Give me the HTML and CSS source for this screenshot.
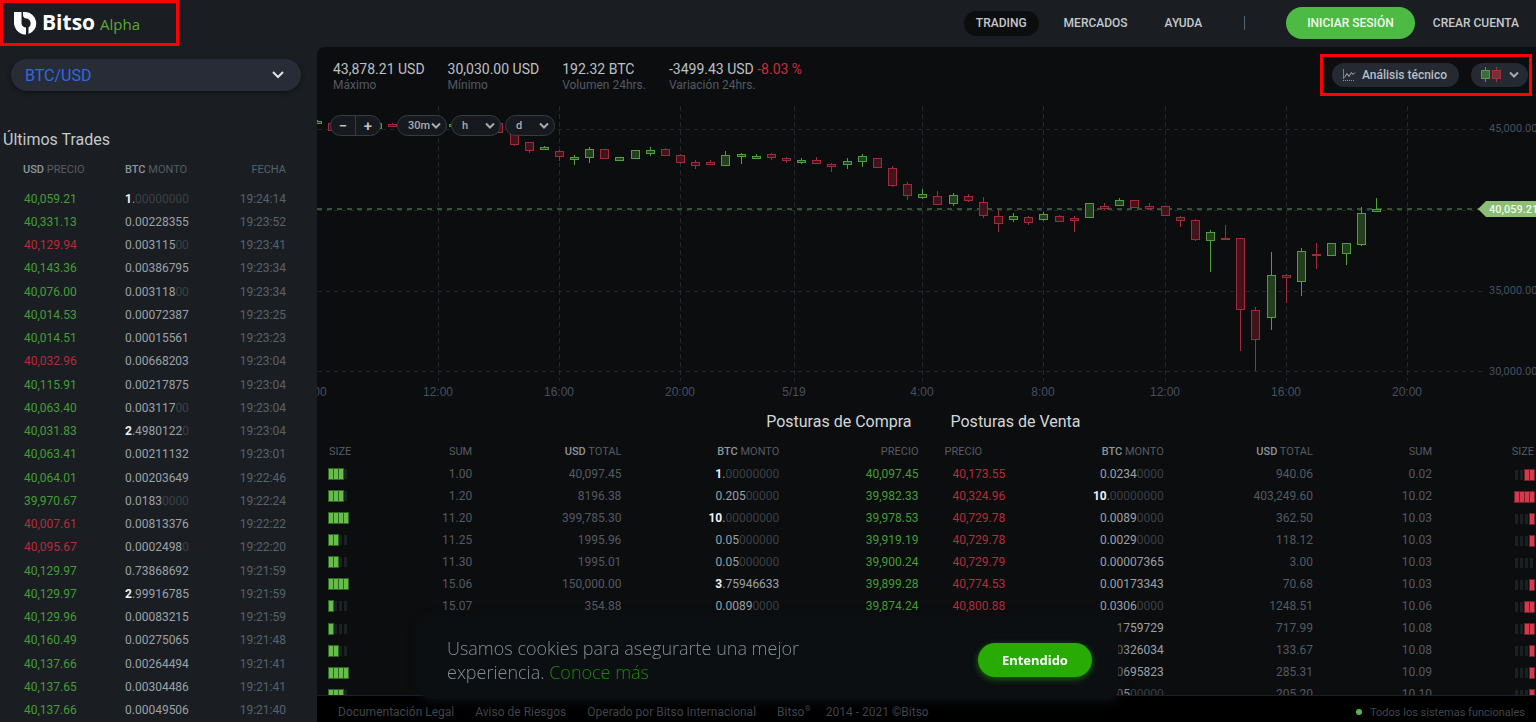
FILE: index.html
```html
<!DOCTYPE html>
<html lang="es">
<head>
<meta charset="utf-8">
<title>Bitso Alpha</title>
<link rel="stylesheet" href="styles.css">
</head>
<body>
<div class="app">
  <header class="topbar">
    <a class="logo" href="#">
      <svg class="logo-mark" viewBox="0 0 24 24" aria-hidden="true">
        <path d="M1 1H8.500V13A5 5 0 0 0 13 16.500V23.500A12 12 0 0 1 1 12Z" fill="#fff"/>
        <path d="M10 1H12.500A11.300 11.300 0 0 1 15.500 23V16.500A5.200 5.200 0 0 0 14.500 7.500H13.500A3.800 3.800 0 0 1 10 4Z" fill="#fff"/>
      </svg>
      <span class="logo-name">Bitso</span>
      <span class="logo-sub">Alpha</span>
    </a>
    <nav class="nav">
      <a class="nav-link active" href="#">TRADING</a>
      <a class="nav-link" href="#">MERCADOS</a>
      <a class="nav-link" href="#">AYUDA</a>
      <span class="nav-sep"></span>
      <button class="login" type="button">INICIAR SESIÓN</button>
      <a class="signup" href="#">CREAR CUENTA</a>
    </nav>
    <span class="mark mark-logo"></span>
  </header>

  <aside class="sidebar">
    <div class="pair">
      <select class="pair-select" aria-label="Mercado"><option>BTC/USD</option></select>
      <svg class="chev chev-lg" viewBox="0 0 12 8" aria-hidden="true"><path d="M1 1l5 5 5-5"/></svg>
    </div>
    <h2 class="side-title">Últimos Trades</h2>
    <div class="trades-wrap">
      <table class="trades">
        <thead><tr><th><b>USD</b> PRECIO</th><th><b>BTC</b> MONTO</th><th class="num">FECHA</th></tr></thead>
        <tbody id="trades"></tbody>
      </table>
    </div>
  </aside>

  <main class="main">
    <section class="market">
      <dl class="stats">
        <div><dd>43,878.21 USD</dd><dt>Máximo</dt></div>
        <div><dd>30,030.00 USD</dd><dt>Mínimo</dt></div>
        <div><dd>192.32 BTC</dd><dt>Volumen 24hrs.</dt></div>
        <div><dd>-3499.43 USD <span class="neg">-8.03 %</span></dd><dt>Variación 24hrs.</dt></div>
      </dl>
      <div class="tools">
        <button class="tool" type="button">
          <svg class="tool-icon" viewBox="0 0 14 14" aria-hidden="true">
            <path d="M1.500 1V11" stroke="#76808a"/><path d="M2.500 9.500L5 5.500l2 3 2.500-4 1.500 2 2-2" stroke="#a9b0b7"/><path d="M1 12.500H13" stroke="#8a929b" stroke-dasharray="1 1"/>
          </svg>
          Análisis técnico
        </button>
        <button class="tool tool-type" type="button" aria-label="Tipo de gráfica">
          <svg class="candles-icon" viewBox="0 0 20 16" aria-hidden="true">
            <path d="M4.500 0v4M4.500 12v3" stroke="#4fa13f"/><rect x="0.500" y="3.500" width="8" height="8" fill="#3f6b39" stroke="#4fa13f"/>
            <path d="M15.500 0v4M15.500 12v3" stroke="#a32f3f"/><rect x="11.500" y="3.500" width="8" height="8" fill="#73303b" stroke="#a32f3f"/>
          </svg>
          <svg class="chev" viewBox="0 0 12 8" aria-hidden="true"><path d="M2 1.500l4 4 4-4"/></svg>
        </button>
      </div>
      <span class="mark mark-tools"></span>
    </section>

    <section class="chart">
      <svg class="chart-svg" id="chart" viewBox="0 0 1219 301" role="img" aria-label="Gráfica de velas BTC/USD"></svg>
      <div class="controls">
        <div class="zoom"><button type="button">−</button><button type="button">+</button></div>
        <div class="period"><select aria-label="Minutos"><option>30m</option></select><svg class="chev" viewBox="0 0 12 8" aria-hidden="true"><path d="M2 1.500l4 4 4-4"/></svg></div>
        <div class="period"><select aria-label="Horas"><option>h</option></select><svg class="chev" viewBox="0 0 12 8" aria-hidden="true"><path d="M2 1.500l4 4 4-4"/></svg></div>
        <div class="period"><select aria-label="Días"><option>d</option></select><svg class="chev" viewBox="0 0 12 8" aria-hidden="true"><path d="M2 1.500l4 4 4-4"/></svg></div>
      </div>
    </section>

    <section class="book">
      <div class="side bids">
        <h2>Posturas de Compra</h2>
        <table>
          <colgroup><col class="b1"><col class="b2"><col class="b3"><col class="b4"></colgroup>
          <thead><tr><th class="size-sum"><span>SIZE</span><span>SUM</span></th><th><b>USD</b> TOTAL</th><th><b>BTC</b> MONTO</th><th>PRECIO</th></tr></thead>
          <tbody id="bids"></tbody>
        </table>
      </div>
      <div class="side asks">
        <h2>Posturas de Venta</h2>
        <table>
          <colgroup><col class="a1"><col class="a2"><col class="a3"><col class="a4"><col class="a5"></colgroup>
          <thead><tr><th class="left">PRECIO</th><th><b>BTC</b> MONTO</th><th><b>USD</b> TOTAL</th><th>SUM</th><th>SIZE</th></tr></thead>
          <tbody id="asks"></tbody>
        </table>
      </div>
    </section>

    <footer class="footer">
      <a href="#">Documentación Legal</a>
      <a href="#">Aviso de Riesgos</a>
      <span>Operado por Bitso Internacional</span>
      <span class="brand">Bitso<sup>®</sup></span>
      <span>2014 - 2021 ©Bitso</span>
      <span class="status"><i class="dot"></i>Todos los sistemas funcionales</span>
    </footer>
  </main>
</div>

<div class="cookies" role="dialog" aria-label="Cookies">
  <p>Usamos cookies para asegurarte una mejor experiencia. <a href="#">Conoce más</a></p>
  <button type="button">Entendido</button>
</div>
<script src="app.js"></script>
</body>
</html>
```
FILE: styles.css
```css
* { box-sizing: border-box; }
body { margin: 0; background: #1a1e22; color: #c3c8cc; font-family: Roboto, "Liberation Sans", sans-serif; font-size: 12px; }
button, select { font: inherit; color: inherit; border: 0; margin: 0; padding: 0; cursor: pointer; }
select { appearance: none; }
a { color: inherit; text-decoration: none; }
h2 { margin: 0; font-size: 16px; font-weight: 400; line-height: 20px; }
table { border-collapse: collapse; }
th, td { padding: 0; text-align: right; font-weight: 400; white-space: nowrap; }
th { font-size: 11px; color: #555c63; }
th b { font-weight: 500; color: #8b969e; }

.app { display: grid; grid-template: 47px minmax(0, 1fr) / 317px minmax(0, 1fr); height: 100vh; min-height: 560px; overflow: hidden; }
.mark { position: absolute; border: 3px solid #fd0001; pointer-events: none; z-index: 5; }

.topbar { grid-column: 1 / -1; position: relative; display: flex; align-items: center; justify-content: space-between; padding: 0 17px 1px 13px; }
.mark-logo { left: 0; top: 0; width: 179px; height: 46px; }
.logo { display: flex; align-items: baseline; font-family: "Open Sans", "Noto Sans", sans-serif; line-height: 28px; }
.logo-mark { width: 24px; height: 24px; align-self: center; }
.logo-name { margin-left: 5px; color: #fff; font-size: 21px; font-weight: 700; }
.logo-sub { margin-left: 5px; color: #5fa836; font-size: 15px; }
.nav { display: flex; align-items: center; font-weight: 500; }
.nav-link { padding: 0 12px; line-height: 25px; border-radius: 13px; margin-right: 13px; }
.nav-link.active { background: #0c0d0f; }
.nav-sep { width: 1px; height: 14px; background: #59636d; margin: 0 41px 0 17px; }
.login { height: 32px; padding: 0 21px; border-radius: 16px; background: #4dbb43; color: #f0f8ef; margin-right: 18px; }

.sidebar { display: flex; flex-direction: column; min-height: 0; }
.pair { position: relative; margin: 12px 16px 0 11px; }
.pair-select { width: 100%; height: 32px; padding: 0 14px; border-radius: 16px; background: #272c37; color: #2e6be0; font-size: 16px; box-shadow: 0 2px 4px #101316; }
.chev { width: 12px; height: 8px; fill: none; stroke: #a8acb0; stroke-width: 2; pointer-events: none; }
.chev-lg { position: absolute; right: 17px; top: 12px; stroke: #dfe3e8; }
.side-title { margin: 39px 0 2px 3px; }
.trades-wrap { flex: 1; min-height: 0; }
.trades { width: 100%; height: 100%; table-layout: fixed; }
.trades thead tr { height: 35px; }
.trades th:nth-child(1) { width: 125px; padding-left: 23px; }
.trades td:nth-child(1) { padding-left: 24px; }
.trades th, .trades td { text-align: left; }
.trades th.num, .trades td.num { text-align: right; padding-right: 31px; color: #59616a; }

.main { display: flex; flex-direction: column; min-width: 0; min-height: 0; background: #0c0d0f; border-top-left-radius: 8px; overflow: hidden; }
.market { position: relative; display: flex; justify-content: space-between; align-items: flex-start; padding: 14px 8px 0 16px; }
.stats { display: flex; gap: 23px; margin: 0; white-space: nowrap; }
.stats div { display: flex; flex-direction: column; }
.stats dd { margin: 0; font-size: 14px; line-height: 16px; color: #bcc1c5; }
.stats dt { line-height: 16px; color: #525a63; }
.neg { color: #c92e3e; }
.tools { display: flex; gap: 12px; padding-top: 2px; }
.tool { display: flex; align-items: center; gap: 6px; height: 24px; padding: 0 12px 0 10px; border-radius: 12px; background: #242932; color: #b9bfc6; font-weight: 500; }
.tool-type { padding: 0 8px 0 10px; gap: 7px; }
.tool-icon { width: 14px; height: 14px; fill: none; }
.candles-icon { width: 20px; height: 16px; fill: none; }
.mark-tools { right: 4px; top: 7px; width: 212px; height: 42px; }

.chart { position: relative; margin-top: 11px; flex: none; }
.chart-svg { display: block; width: 100%; height: auto; }
.axis { fill: #465060; font: 12px "Liberation Sans", sans-serif; text-anchor: middle; }
.price { fill: #465060; font: 11px Roboto, sans-serif; }
.price-now { fill: #f2f8ee; font: 500 11px Roboto, sans-serif; }
.controls { position: absolute; left: 13px; top: 11px; display: flex; gap: 4px; font-weight: 500; color: #a8acb0; }
.zoom { display: flex; width: 51px; height: 21px; margin-right: 12px; border: 1px solid #363c44; border-radius: 11px; background: #161a1f; overflow: hidden; }
.zoom button { flex: 1; background: none; font-size: 15px; line-height: 18px; color: #c4c8cb; }
.zoom button + button { border-left: 1px solid #363c44; }
.period { position: relative; width: 50px; height: 21px; }
.period select { width: 100%; height: 21px; padding: 0 10px; border: 1px solid #363c44; border-radius: 11px; background: #161a1f; font-size: 11px; font-weight: 500; }
.period .chev { position: absolute; right: 5px; top: 7px; }

.book { display: grid; grid-template-columns: 1fr 1fr; flex: 1; min-height: 0; overflow: hidden; padding-top: 7px; }
.book h2 { color: #d3d7da; }
.book table { width: 100%; table-layout: fixed; color: #535a62; }
.book thead tr { height: 31px; }
.book tbody tr { height: 22px; }
.book th { padding-top: 8px; }
.bids { padding: 0 8px 0 12px; }
.bids h2 { text-align: right; padding-right: 7px; }
.asks { padding: 0 2px 0 18px; }
.asks h2 { padding-left: 6px; }
.size-sum span + span { float: right; }
.size-sum { text-align: left; }
.size-sum .bars { float: left; margin-top: 2px; }
td.size-sum { text-align: right; }
.b1 { width: 24.3%; } .b2 { width: 25.3%; } .b3 { width: 26.8%; } .b4 { width: 23.6%; }
.a1 { width: 17%; } .a2 { width: 20.2%; } .a3 { width: 25.3%; } .a4 { width: 20.2%; } .a5 { width: 17.3%; }
.book .left { text-align: left; }
.asks td.left { padding-left: 8px; }
.bars { display: inline-flex; gap: 1px; vertical-align: middle; }
.bars i { width: 4px; height: 10px; background: #1b2025; border-right: 1px solid #0c0d0f; }
.bars i.on { border: 0; }
.bids .on { background: #66bd49; box-shadow: 0 0 0 1px #2f6626; }
.asks .on { background: #d6394c; box-shadow: 0 0 0 1px #6d222d; }
.up { color: #459c38; }
.down { color: #b62c3a; }
.amt { color: #9aa1a8; }
.amt b { font-weight: 700; color: #eef1f3; }
.amt s { text-decoration: none; color: #3a4045; }

.footer { display: flex; align-items: center; gap: 21px; flex: none; height: 27px; padding: 6px 11px 0 21px; border-top: 1px solid #1b2127; background: #000; color: #40464d; white-space: nowrap; }
.brand { margin-right: -6px; }
.footer sup { font-size: 8px; line-height: 0; }
.status { display: flex; align-items: center; gap: 8px; margin-left: auto; font-size: 11px; }
.dot { width: 6px; height: 6px; border-radius: 3px; background: #5bb54a; }

.cookies { position: fixed; left: 422px; right: 418px; bottom: 23px; display: flex; align-items: center; justify-content: space-between; min-height: 78px; padding: 0 26px 0 25px; border-radius: 8px; background: #0b0f12; box-shadow: 0 0 12px 2px #0e1215; }
.cookies p { max-width: 370px; margin: 0; font: 300 18px/24px "Open Sans", "Noto Sans", sans-serif; color: #858d97; }
.cookies a { color: #1d8a05; }
.cookies button { height: 34px; padding: 0 24px; border-radius: 17px; background: #28ab04; color: #fff; font: 700 13px "Noto Sans", sans-serif; box-shadow: 0 2px 6px #1b6b08; }
```
FILE: app.js
```js
// Amounts use "*" around a highlighted integer part and "|" before the dimmed trailing zeros.
function amount(text) {
  var parts = text.split('|');
  var head = parts[0].replace(/^\*(\d+)\*/, '<b>$1</b>');
  return head + (parts[1] ? '<s>' + parts[1] + '</s>' : '');
}

var trades = [
  ['u', '40,059.21', '*1*.|00000000', '19:24:14'],
  ['u', '40,331.13', '0.00228355', '19:23:52'],
  ['d', '40,129.94', '0.003115|00', '19:23:41'],
  ['u', '40,143.36', '0.00386795', '19:23:34'],
  ['u', '40,076.00', '0.003118|00', '19:23:34'],
  ['u', '40,014.53', '0.00072387', '19:23:25'],
  ['u', '40,014.51', '0.00015561', '19:23:23'],
  ['d', '40,032.96', '0.00668203', '19:23:04'],
  ['u', '40,115.91', '0.00217875', '19:23:04'],
  ['u', '40,063.40', '0.003117|00', '19:23:04'],
  ['u', '40,031.83', '*2*.4980122|0', '19:23:04'],
  ['u', '40,063.41', '0.00211132', '19:23:01'],
  ['u', '40,064.01', '0.00203649', '19:22:46'],
  ['u', '39,970.67', '0.0183|0000', '19:22:24'],
  ['d', '40,007.61', '0.00813376', '19:22:22'],
  ['d', '40,095.67', '0.0002498|0', '19:22:20'],
  ['u', '40,129.97', '0.73868692', '19:21:59'],
  ['u', '40,129.97', '*2*.99916785', '19:21:59'],
  ['u', '40,129.96', '0.00083215', '19:21:59'],
  ['u', '40,160.49', '0.00275065', '19:21:48'],
  ['u', '40,137.66', '0.00264494', '19:21:41'],
  ['u', '40,137.65', '0.00304486', '19:21:41'],
  ['u', '40,137.66', '0.00049506', '19:21:40']
];
document.getElementById('trades').innerHTML = trades.map(function (t) {
  return '<tr><td class="' + (t[0] === 'u' ? 'up' : 'down') + '">' + t[1] + '</td><td class="amt">' + amount(t[2]) + '</td><td class="num">' + t[3] + '</td></tr>';
}).join('');

function bars(level, reverse) {
  var out = '';
  for (var i = 0; i < 4; i++) {
    var on = reverse ? i >= 4 - level : i < level;
    out += '<i' + (on ? ' class="on"' : '') + '></i>';
  }
  return '<span class="bars">' + out + '</span>';
}

var bids = [
  [3, '1.00', '40,097.45', '*1*.|00000000', '40,097.45'],
  [3, '1.20', '8196.38', '0.205|00000', '39,982.33'],
  [4, '11.20', '399,785.30', '*10*.|00000000', '39,978.53'],
  [2, '11.25', '1995.96', '0.05|000000', '39,919.19'],
  [2, '11.30', '1995.01', '0.05|000000', '39,900.24'],
  [4, '15.06', '150,000.00', '*3*.75946633', '39,899.28'],
  [1, '15.07', '354.88', '0.0089|0000', '39,874.24'],
  [1, '', '', '', ''],
  [2, '', '', '', ''],
  [4, '', '', '', ''],
  [3, '', '', '', '']
];
document.getElementById('bids').innerHTML = bids.map(function (b) {
  return '<tr><td class="size-sum">' + bars(b[0], false) + b[1] + '</td><td>' + b[2] + '</td><td class="amt">' + amount(b[3]) + '</td><td class="up">' + b[4] + '</td></tr>';
}).join('');

var asks = [
  ['40,173.55', '0.0234|0000', '940.06', '0.02', 2],
  ['40,324.96', '*10*.|00000000', '403,249.60', '10.02', 4],
  ['40,729.78', '0.0089|0000', '362.50', '10.03', 1],
  ['40,729.78', '0.0029|0000', '118.12', '10.03', 1],
  ['40,729.79', '0.00007365', '3.00', '10.03', 0],
  ['40,774.53', '0.00173343', '70.68', '10.03', 1],
  ['40,800.88', '0.0306|0000', '1248.51', '10.06', 2],
  ['', '0.01759729', '717.99', '10.08', 2],
  ['', '0.00326034', '133.67', '10.08', 1],
  ['', '0.00695823', '285.31', '10.09', 1],
  ['', '0.005|00000', '205.20', '10.10', 1]
];
document.getElementById('asks').innerHTML = asks.map(function (a) {
  return '<tr><td class="left down">' + a[0] + '</td><td class="amt">' + amount(a[1]) + '</td><td>' + a[2] + '</td><td>' + a[3] + '</td><td>' + bars(a[4], true) + '</td></tr>';
}).join('');

// Candles: [slot, up/down, high, body top, body bottom, low] in chart units.
var candles = [
  [-13,'u',16,17,19,19],[-12,'d',18,19,26,26],[-9,'u',18,19,24,24],[-8,'d',19,20,22,23],[-4,'u',19,20,22,22],[-1,'d',18,19,28,28],
  [0,'d',26,28,40,42],[1,'d',38,38,46,49],[2,'u',42,43,45,45],[3,'d',46,47,52,57],[4,'u',51,53,55,61],[5,'u',43,45,53,59],
  [6,'d',45,45,54,55],[7,'u',53,53,56,56],[8,'u',46,46,54,54],[9,'u',43,46,49,52],[10,'d',44,45,51,52],[11,'d',50,51,58,60],
  [12,'d',56,58,61,65],[13,'d',56,58,60,61],[14,'u',47,51,61,61],[15,'u',49,50,52,60],[16,'u',50,52,54,55],[17,'d',49,50,53,56],
  [18,'d',53,54,56,59],[19,'u',54,56,58,60],[20,'d',53,56,59,60],[21,'d',59,60,62,68],[22,'u',54,57,60,65],[23,'u',50,52,57,63],
  [24,'d',54,54,63,64],[25,'d',62,64,81,83],[26,'d',78,80,91,96],[27,'u',85,90,93,95],[28,'d',87,92,100,101],[29,'u',89,91,99,102],
  [30,'d',90,92,96,98],[31,'d',93,98,111,114],[32,'d',106,112,119,128],[33,'u',109,112,115,118],[34,'d',112,113,118,121],[35,'u',108,110,115,117],
  [36,'d',111,112,117,118],[37,'d',112,114,116,128],[38,'u',99,99,113,113],[39,'d',99,102,104,106],[40,'u',94,96,101,102],[41,'d',96,96,103,104],
  [42,'d',99,102,104,105],[43,'d',102,102,111,112],[44,'d',112,113,116,123],[45,'d',115,116,135,137],[46,'u',126,128,136,168],[47,'d',121,134,135,136],
  [48,'d',134,134,205,247],[49,'d',203,206,235,267],[50,'u',148,171,213,226],[51,'d',170,171,173,199],[52,'u',144,147,177,192],[53,'d',139,150,151,165],
  [54,'u',139,139,151,151],[55,'u',139,139,149,161],[56,'u',103,109,140,142],[57,'u',94,105,107,107]
];
var svg = '';
[25, 106, 187, 267].forEach(function (y) {
  svg += '<path d="M1 ' + (y + 0.5) + 'H1168" stroke="#20272f" stroke-dasharray="4 4"/>';
});
[121, 242, 363, 477, 605, 726, 848, 969, 1090].forEach(function (x) {
  svg += '<path d="M' + (x + 0.5) + ' 2V277" stroke="#20272f" stroke-dasharray="5 3"/>';
});
svg += '<path d="M0 105H1163" stroke="#44693b" stroke-width="1.5" stroke-dasharray="5 5"/>';
candles.forEach(function (c) {
  var x = Math.round(196.5 + c[0] * 15.14);
  var up = c[1] === 'u';
  var line = up ? '#519f3c' : '#a02b3c';
  svg += '<path d="M' + (x + 0.5) + ' ' + c[2] + 'V' + c[5] + '" stroke="' + line + '"/>' +
    '<rect x="' + (x - 3.5) + '" y="' + (c[3] + 0.5) + '" width="8" height="' + (c[4] - c[3]) + '" fill="' + (up ? '#233f1d' : '#41141c') + '" stroke="' + line + '"/>';
});
[[-2, '8:00'], [121, '12:00'], [242, '16:00'], [363, '20:00'], [477, '5/19'], [605, '4:00'], [726, '8:00'], [848, '12:00'], [969, '16:00'], [1090, '20:00']].forEach(function (t) {
  svg += '<text class="axis" x="' + t[0] + '" y="292">' + t[1] + '</text>';
});
[[28, '45,000.00'], [190, '35,000.00'], [271, '30,000.00']].forEach(function (t) {
  svg += '<text class="price" x="1172" y="' + t[0] + '">' + t[1] + '</text>';
});
svg += '<path d="M1161 105l8-8h50v16h-50z" fill="#8bbd72"/><text class="price-now" x="1172" y="109">40,059.21</text>';
document.getElementById('chart').innerHTML = svg;
```
